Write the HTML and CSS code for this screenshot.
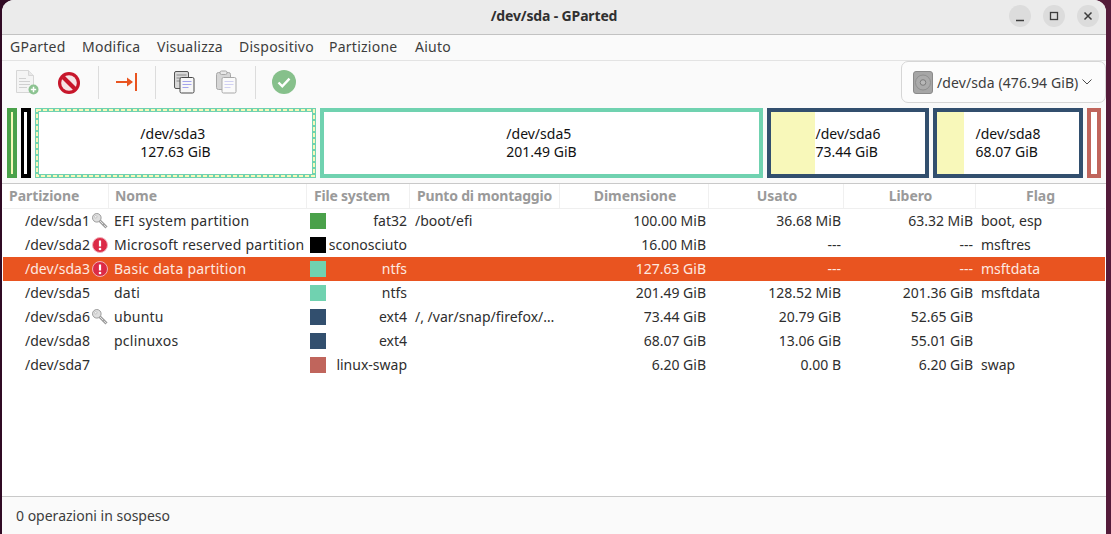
FILE: index.html
```html
<!DOCTYPE html>
<html lang="it">
<head>
<meta charset="utf-8">
<title>/dev/sda - GParted</title>
<link rel="stylesheet" href="styles.css">
</head>
<body>
<div class="window">
  <header class="titlebar">
    <div class="title">/dev/sda - GParted</div>
    <div class="winbtns">
      <span class="winbtn"><svg width="22" height="22" viewBox="0 0 22 22"><path d="M7 15.5h8" stroke="#3d3d3d" stroke-width="1.4" fill="none"/></svg></span>
      <span class="winbtn"><svg width="22" height="22" viewBox="0 0 22 22"><rect x="7.5" y="7.5" width="7" height="7" stroke="#3d3d3d" stroke-width="1.3" fill="none"/></svg></span>
      <span class="winbtn"><svg width="22" height="22" viewBox="0 0 22 22"><path d="M7.5 7.5l7 7M14.5 7.5l-7 7" stroke="#3d3d3d" stroke-width="1.5" fill="none"/></svg></span>
    </div>
  </header>
  <nav class="menubar">
    <span class="m1">GParted</span><span class="m2">Modifica</span><span class="m3">Visualizza</span><span class="m4">Dispositivo</span><span class="m5">Partizione</span><span class="m6">Aiuto</span>
  </nav>
  <div class="toolbar">
    <span class="tool"><svg width="24" height="26" viewBox="0 0 24 26"><path d="M1.5 1.5h12l5 5v17h-17z" fill="#f4f4f4" stroke="#d6d6d6"/><path d="M13.5 1.5v5h5" fill="#e8e8e8" stroke="#d6d6d6"/><path d="M4 9.500h7M4 12.500h11M4 15.500h11M4 18.500h8" stroke="#d0d0d0"/><circle cx="18.500" cy="20.500" r="5" fill="#8cc391"/><path d="M15.800 20.500h5.400M18.500 17.800v5.400" stroke="#fff" stroke-width="1.500"/></svg></span>
    <span class="tool"><svg class="stop" width="22" height="22" viewBox="0 0 22 22"><circle cx="11" cy="11" r="11" fill="#c7162b"/><circle cx="11" cy="11" r="7.800" fill="#f6e4e6"/><path d="M5.200 5.200l11.600 11.600" stroke="#c7162b" stroke-width="4.200"/></svg></span>
    <span class="sep"></span>
    <span class="tool"><svg width="24" height="20" viewBox="0 0 24 20"><path d="M1 10h16" stroke="#e95420" stroke-width="2"/><path d="M12 5.500l6 4.500-6 4.500z" fill="#e95420"/><path d="M21 1v18" stroke="#e95420" stroke-width="2"/></svg></span>
    <span class="sep"></span>
    <span class="tool"><svg width="22" height="24" viewBox="0 0 22 24"><rect x="1.500" y="1.500" width="14" height="17" rx="1.500" fill="#d8d8d8" stroke="#555"/><path d="M3.500 5h10M3.500 8h10M3.500 11h10" stroke="#8a8a8a"/><rect x="7" y="7.500" width="14" height="15.500" rx="1.500" fill="#f7f7f7" stroke="#484848"/><path d="M9.500 11.500h9M9.500 14.500h9M9.500 17.500h6" stroke="#a3a3ec"/></svg></span>
    <span class="tool"><svg width="22" height="24" viewBox="0 0 22 24"><rect x="1.500" y="2.500" width="14" height="17" rx="2" fill="#d6d6d6" stroke="#a8a8a8"/><rect x="5" y="1" width="7" height="3.500" rx="1.500" fill="#e8e8e8" stroke="#a8a8a8"/><rect x="7" y="7.500" width="14" height="15.500" rx="1.500" fill="#fafafa" stroke="#a8a8a8"/><path d="M9.500 11.500h9M9.500 14.500h9M9.500 17.500h6" stroke="#d0d0f2"/></svg></span>
    <span class="sep"></span>
    <span class="tool"><svg width="24" height="24" viewBox="0 0 24 24"><circle cx="12" cy="12" r="12" fill="#86c08b"/><path d="M6.500 12.500l3.800 3.800 7.200-7.600" stroke="#fff" stroke-width="2.400" fill="none"/></svg></span>
    <div class="combo">
      <svg width="20" height="23" viewBox="0 0 20 23"><rect x=".5" y=".5" width="19" height="22" rx="2.500" fill="#a6a6a6" stroke="#8a8a8a"/><circle cx="10" cy="11.500" r="7.500" fill="#ababab" stroke="#8f8f8f"/><circle cx="10" cy="11.500" r="2.800" fill="#b8b8b8" stroke="#7d7d7d"/></svg>
      <span class="combo-text">/dev/sda (476.94 GiB)</span>
      <svg class="chev" width="10" height="6" viewBox="0 0 10 6"><path d="M.5.500L5 5 9.500.500" stroke="#4a4a4a" fill="none"/></svg>
    </div>
  </div>
  <div class="map">
    <div class="part p-fat p1"></div>
    <div class="part p-unk p2"></div>
    <div class="part p-ntfs p3">
      <svg class="dash" width="281" height="70" viewBox="0 0 281 70"><rect x="2" y="2" width="277" height="66" fill="none" stroke="#f8f8ba" stroke-width="2" stroke-dasharray="4 2"/></svg>
      <div class="lbl">/dev/sda3<br>127.63 GiB</div>
    </div>
    <div class="part p-ntfs p5"><div class="lbl">/dev/sda5<br>201.49 GiB</div></div>
    <div class="part p-ext p6"><div class="lbl">/dev/sda6<br>73.44 GiB</div></div>
    <div class="part p-ext p8"><div class="lbl">/dev/sda8<br>68.07 GiB</div></div>
    <div class="part p-swap p7"></div>
  </div>
  <main class="tree">
    <div class="grid head">
      <span class="h-l">Partizione</span><span class="h-l">Nome</span><span class="h-l h-in">File system</span><span class="h-l h-in">Punto di montaggio</span><span class="h-c">Dimensione</span><span class="h-c">Usato</span><span class="h-c">Libero</span><span class="h-c">Flag</span>
    </div>
    <div class="grid row">
      <span class="c-part">/dev/sda1<svg class="ico" width="16" height="16" viewBox="0 0 16 16"><use href="#key"/></svg></span><span class="c-name">EFI system partition</span><span class="c-fs"><i class="sw s-fat"></i><b>fat32</b></span><span class="c-mount">/boot/efi</span><span class="c-r">100.00 MiB</span><span class="c-r">36.68 MiB</span><span class="c-r">63.32 MiB</span><span class="c-flag">boot, esp</span>
    </div>
    <div class="grid row">
      <span class="c-part">/dev/sda2<svg class="ico" width="16" height="16" viewBox="0 0 16 16"><use href="#err"/></svg></span><span class="c-name">Microsoft reserved partition</span><span class="c-fs"><i class="sw s-unk"></i><b>sconosciuto</b></span><span class="c-mount"></span><span class="c-r">16.00 MiB</span><span class="c-r">---</span><span class="c-r">---</span><span class="c-flag">msftres</span>
    </div>
    <div class="grid row sel">
      <span class="c-part">/dev/sda3<svg class="ico" width="16" height="16" viewBox="0 0 16 16"><use href="#err"/></svg></span><span class="c-name">Basic data partition</span><span class="c-fs"><i class="sw s-ntfs"></i><b>ntfs</b></span><span class="c-mount"></span><span class="c-r">127.63 GiB</span><span class="c-r">---</span><span class="c-r">---</span><span class="c-flag">msftdata</span>
    </div>
    <div class="grid row">
      <span class="c-part">/dev/sda5</span><span class="c-name">dati</span><span class="c-fs"><i class="sw s-ntfs"></i><b>ntfs</b></span><span class="c-mount"></span><span class="c-r">201.49 GiB</span><span class="c-r">128.52 MiB</span><span class="c-r">201.36 GiB</span><span class="c-flag">msftdata</span>
    </div>
    <div class="grid row">
      <span class="c-part">/dev/sda6<svg class="ico" width="16" height="16" viewBox="0 0 16 16"><use href="#key"/></svg></span><span class="c-name">ubuntu</span><span class="c-fs"><i class="sw s-ext"></i><b>ext4</b></span><span class="c-mount">/, /var/snap/firefox/…</span><span class="c-r">73.44 GiB</span><span class="c-r">20.79 GiB</span><span class="c-r">52.65 GiB</span><span class="c-flag"></span>
    </div>
    <div class="grid row">
      <span class="c-part">/dev/sda8</span><span class="c-name">pclinuxos</span><span class="c-fs"><i class="sw s-ext"></i><b>ext4</b></span><span class="c-mount"></span><span class="c-r">68.07 GiB</span><span class="c-r">13.06 GiB</span><span class="c-r">55.01 GiB</span><span class="c-flag"></span>
    </div>
    <div class="grid row">
      <span class="c-part">/dev/sda7</span><span class="c-name"></span><span class="c-fs"><i class="sw s-swap"></i><b>linux-swap</b></span><span class="c-mount"></span><span class="c-r">6.20 GiB</span><span class="c-r">0.00 B</span><span class="c-r">6.20 GiB</span><span class="c-flag">swap</span>
    </div>
  </main>
  <footer class="status">0 operazioni in sospeso</footer>
</div>
<svg class="defs" width="0" height="0">
  <symbol id="key" viewBox="0 0 16 16"><path d="M6.500 6.500l8 8" stroke="#9c9c9c" stroke-width="3" fill="none"/><path d="M6.500 6.500l8 8" stroke="#e4e4e4" stroke-width="1" fill="none"/><path d="M11 12.500l1.500-1.500" stroke="#9c9c9c" stroke-width="1.500"/><circle cx="4.800" cy="4.800" r="4.300" fill="#dedede" stroke="#9c9c9c"/><circle cx="3.800" cy="3.800" r="1.200" fill="#fff" stroke="#a8a8a8" stroke-width=".6"/></symbol>
  <symbol id="err" viewBox="0 0 16 16"><circle cx="8" cy="8" r="7.500" fill="#dc2a46" stroke="#f0b0b8" stroke-width="1"/><path d="M8 3.500v6" stroke="#fff" stroke-width="2.200"/><circle cx="8" cy="12" r="1.300" fill="#fff"/></symbol>
</svg>
</body>
</html>
```
FILE: styles.css
```css
* { box-sizing: border-box; }
html, body { margin: 0; height: 100%; overflow: hidden; }
body {
  background: linear-gradient(to right, #300a24 0 556px, #541b3a 556px);
  padding: 0 5px 0 2px;
  font-family: "Noto Sans", "Open Sans", sans-serif;
  font-size: 14px;
  color: #2e2e2e;
}
.window {
  height: 534px;
  display: flex;
  flex-direction: column;
  background: #fafafa;
  border-radius: 12px 12px 0 0;
  overflow: hidden;
}
.titlebar {
  height: 35px;
  flex: none;
  background: #ebebeb;
  border-bottom: 1px solid #c2c2c2;
  display: flex;
  align-items: center;
  justify-content: flex-end;
  position: relative;
  padding: 0 7px 2px 0;
}
.title {
  position: absolute;
  left: 0;
  right: 0;
  top: 6px;
  text-align: center;
  font-weight: 700;
  line-height: 20px;
  letter-spacing: -.15px;
  color: #303030;
}
.winbtns { display: flex; gap: 12px; }
.winbtn {
  width: 22px;
  height: 22px;
  border-radius: 50%;
  background: #dcdcdc;
  display: block;
}
.winbtn svg { display: block; }
.menubar {
  height: 26px;
  flex: none;
  border-bottom: 1px solid #e3e3e3;
  display: flex;
  align-items: center;
  padding: 0 0 2px 8px;
  color: #3d3d3d;
  letter-spacing: .25px;
}
.menubar span { display: block; }
.m1 { width: 72px; }
.m2 { width: 75px; }
.m3 { width: 82px; }
.m4 { width: 90px; }
.m5 { width: 86px; }
.toolbar {
  height: 42px;
  flex: none;
  display: flex;
  align-items: center;
  padding-left: 4px;
}
.tool {
  width: 42px;
  height: 42px;
  display: flex;
  align-items: center;
  justify-content: center;
}
.tool svg { display: block; }
.stop { margin-top: 2px; }
.sep {
  width: 1px;
  height: 33px;
  background: #dcdcdc;
  margin: 0 7px 0 8px;
}
.sep + .tool + .sep { margin-left: 7px; }
.combo {
  margin-left: auto;
  width: 205px;
  height: 42px;
  border: 1px solid #d6d6d6;
  border-radius: 7px;
  background: #fcfcfc;
  display: flex;
  align-items: center;
  padding-left: 11px;
  color: #3d3d3d;
}
.combo-text { margin-left: 4px; white-space: nowrap; letter-spacing: .1px; }
.chev { margin-left: auto; margin-right: 13px; }
.map {
  flex: none;
  height: 70px;
  margin: 5px 0;
  padding-left: 5px;
  display: flex;
  gap: 4px;
}
.part {
  height: 70px;
  border: 4px solid;
  background: #fff;
  color: #111;
  position: relative;
  display: flex;
  align-items: center;
  justify-content: center;
  line-height: 18px;
}
.lbl { white-space: nowrap; }
.dash { position: absolute; left: -4px; top: -4px; }
.p-fat { border-color: #4aa14a; background: #f8f8ba; }
.p-unk { border-color: #000; }
.p-ntfs { border-color: #70d2b0; }
.p-ext { border-color: #324f6e; }
.p-swap { border-color: #c0655c; }
.p1 { width: 10px; }
.p2 { width: 10px; border-width: 4px 4px 4px 3px; }
.p3 { width: 281px; }
.p5 { width: 443px; }
.p6 { width: 162px; background: linear-gradient(#f8f8ba, #f8f8ba) left / 44px 100% no-repeat #fff; }
.p8 { width: 150px; background: linear-gradient(#f8f8ba, #f8f8ba) left / 27px 100% no-repeat #fff; }
.p7 { width: 14px; }
.tree {
  flex: 1;
  background: #fff;
  border-top: 1px solid #c9c9c9;
  border-bottom: 1px solid #c9c9c9;
  padding: 0 1px;
}
.grid {
  display: grid;
  grid-template-columns: 106px 198px 103px 150px 149px 135px 132px 129px;
}
.head {
  height: 25px;
  border-bottom: 1px solid #efefef;
  font-weight: 700;
  color: #9a9a9a;
  line-height: 24px;
  letter-spacing: -.05px;
}
.head span { border-right: 1px solid #f0f0f0; padding: 0 6px; white-space: nowrap; }
.head span:last-child { border-right: 0; }
.head .h-in { padding-left: 7px; letter-spacing: -.2px; }
.h-l { text-align: left; }
.h-c { text-align: center; }
.head .h-c { padding-left: 8px; }
.head .h-c:last-child { padding-left: 6px; }
.row {
  height: 24px;
  line-height: 24px;
  white-space: nowrap;
}
.row > span { display: block; min-width: 0; }
.c-part { padding-left: 22px; display: flex !important; align-items: center; }
.ico { display: block; flex: none; position: absolute; margin-left: 67px; }
.c-name { padding-left: 5px; letter-spacing: .25px; }
.c-fs { display: flex !important; align-items: center; justify-content: space-between; padding: 0 3px 0 3px; }
.c-fs b { font-weight: 400; }
.sw { display: block; width: 16px; height: 16px; flex: none; }
.s-fat { background: #4aa14a; }
.s-unk { background: #000; }
.s-ntfs { background: #70d2b0; }
.s-ext { background: #324f6e; }
.s-swap { background: #c0655c; }
.c-mount { padding-left: 5px; }
.c-r { text-align: right; padding-right: 3px; }
.c-flag { padding-left: 5px; }
.sel { background: #e95420; color: #fde9e0; }
.status {
  height: 37px;
  flex: none;
  display: flex;
  align-items: center;
  padding-left: 14px;
  color: #3d3d3d;
  background: #fafafa;
}
.defs { position: absolute; }
```
